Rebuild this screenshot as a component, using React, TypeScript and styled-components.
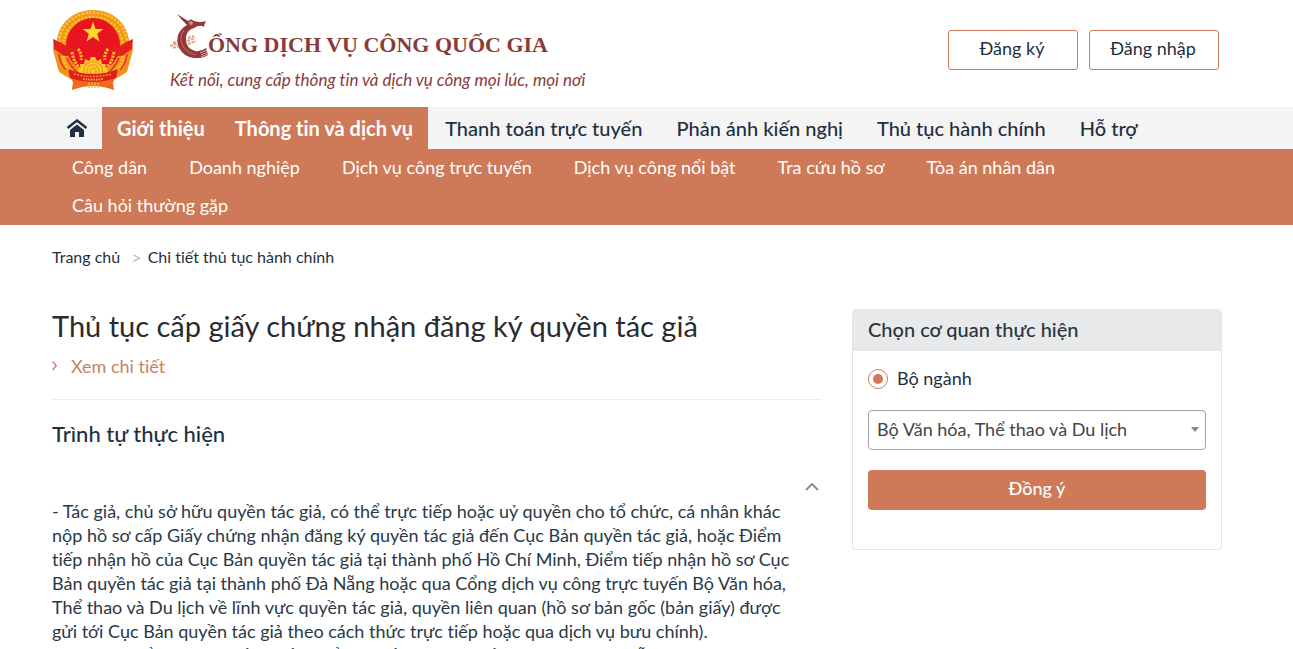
import React from "react";
import styled, { createGlobalStyle } from "styled-components";

const accent = "#ce7a58";
const ink = "#1e2f41";
const maroon = "#8b3a3a";

const GlobalStyle = createGlobalStyle`
  *, *::before, *::after { box-sizing: border-box; }
  body {
    margin: 0;
    background: #fff;
    color: ${ink};
    font-family: Lato, "Noto Sans", sans-serif;
    font-size: 18px;
    line-height: 24px;
    font-variant-ligatures: none;
  }
  h1, h2, p, ul, ol { margin: 0; padding: 0; }
  ul, ol { list-style: none; }
  a { color: inherit; text-decoration: none; }
  button, select { font: inherit; color: inherit; }
`;

const Container = styled.div`
  padding: 0 71px 0 52px;
`;

const HeaderRow = styled(Container)`
  display: flex;
  justify-content: space-between;
  align-items: flex-start;
  height: 107px;
`;

const Brand = styled.a`
  display: flex;
  gap: 36px;
  padding-top: 8px;
`;

const BrandText = styled.span`
  display: flex;
  flex-direction: column;
  color: ${maroon};
`;

const BrandName = styled.span`
  display: flex;
  align-items: flex-end;
  height: 50px;
  font-family: "Liberation Serif", serif;
  font-size: 22px;
  font-weight: 700;
  line-height: 26px;
`;

const Slogan = styled.span`
  padding-top: 10px;
  font-size: 17px;
  font-style: italic;
`;

const Auth = styled.div`
  display: flex;
  gap: 11px;
  padding: 30px 3px 0 0;
`;

const OutlineButton = styled.button`
  width: 130px;
  height: 40px;
  padding: 0 2px 4px 0;
  border: 1px solid ${accent};
  border-radius: 3px;
  background: #fff;
  cursor: pointer;
`;

const NavBar = styled.nav`
  background: #f4f4f4;
`;

const NavList = styled.ul`
  display: flex;
  height: 42px;
`;

const NavLink = styled.a<{ $kind: "home" | "active" | "plain" }>`
  display: flex;
  align-items: center;
  height: 42px;
  padding: 0 ${(p) => (p.$kind === "plain" ? 17 : 15)}px;
  font-size: 20px;
  font-weight: ${(p) => (p.$kind === "active" ? 700 : 500)};
  color: ${(p) => (p.$kind === "active" ? "#fff" : ink)};
  background: ${(p) => (p.$kind === "active" ? accent : "transparent")};
`;

const SubNav = styled.nav`
  background: ${accent};
  color: #fff;
`;

const SubList = styled.ul`
  display: flex;
  flex-wrap: wrap;
  column-gap: 2px;
`;

const SubLink = styled.a`
  display: block;
  height: 38px;
  padding: 0 20px;
  line-height: 36px;
`;

const Crumbs = styled.ol`
  display: flex;
  gap: 6px;
  padding-top: 20px;
  font-size: 16px;
`;

const CrumbMark = styled.span`
  padding-left: 5px;
  font-size: 18px;
  color: #b9bdc1;
`;

const Columns = styled.main`
  display: grid;
  grid-template-columns: minmax(0, 1fr) 370px;
  align-items: start;
  gap: 30px;
  padding-top: 39px;
`;

const Title = styled.h1`
  font-size: 29px;
  font-weight: 400;
  line-height: 34px;
  color: #2b2b2f;
`;

const DetailLink = styled.a`
  display: flex;
  align-items: center;
  gap: 14px;
  padding: 11px 0 21px;
  border-bottom: 1px solid #ececec;
  color: #c7816a;
`;

const SectionTitle = styled.h2`
  padding-top: 19px;
  font-size: 22px;
  font-weight: 500;
  line-height: 30px;
`;

const Toggle = styled.button`
  display: block;
  margin: 27px 2px 7px auto;
  width: 16px;
  height: 16px;
  padding: 0;
  border: 0;
  background: none;
  color: #8a8a8a;
  cursor: pointer;
`;

const Steps = styled.div`
  padding: 0 14px 24px 0;
  color: #2a3947;
`;

const Card = styled.form`
  min-height: 241px;
  border: 1px solid #e3e4e6;
  border-radius: 4px;
  overflow: hidden;
`;

const CardHead = styled.h2`
  padding: 7px 15px 10px;
  background: #e7e9eb;
  font-size: 20px;
  font-weight: 500;
  line-height: 24px;
  color: #2b343d;
`;

const CardBody = styled.div`
  display: grid;
  gap: 20px;
  padding: 15px;
`;

const RadioLabel = styled.label`
  display: flex;
  align-items: center;
  gap: 9px;
`;

const Radio = styled.input`
  appearance: none;
  display: grid;
  place-items: center;
  width: 20px;
  height: 20px;
  margin: 2px 0 0;
  border: 1px solid ${accent};
  border-radius: 50%;
  background: #fff;

  &:checked::before {
    content: "";
    width: 10px;
    height: 10px;
    border-radius: 50%;
    background: ${accent};
  }
`;

const SelectWrap = styled.div`
  position: relative;
`;

const Select = styled.select`
  appearance: none;
  width: 100%;
  height: 40px;
  padding: 0 28px 2px 8px;
  border: 1px solid #a3a3a3;
  border-radius: 4px;
  background: #fff;
  color: #444;
`;

const Caret = styled.svg`
  position: absolute;
  top: 17px;
  right: 7px;
  pointer-events: none;
`;

const Submit = styled.button`
  height: 40px;
  padding: 0 0 4px;
  border: 0;
  border-radius: 4px;
  background: ${accent};
  color: #fff;
  font-weight: 500;
  cursor: pointer;
`;

const star = (cx: number, cy: number, r: number) =>
  Array.from({ length: 10 }, (_, i) => {
    const a = -Math.PI / 2 + (i * Math.PI) / 5;
    const d = i % 2 ? r * 0.4 : r;
    return `${(cx + d * Math.cos(a)).toFixed(2)},${(cy + d * Math.sin(a)).toFixed(2)}`;
  }).join(" ");

function Emblem() {
  return (
    <svg width="82" height="84" viewBox="0 0 82 84" role="img" aria-label="Quốc huy Việt Nam">
      <path d="M41 2 C62 2 76 17 77 33 Q81 36 81 42 L75 64 Q58 76 41 76 Q24 76 7 64 L1 42 Q1 36 5 33 C6 17 20 2 41 2Z" fill="#f0941c" />
      <g fill="none" stroke="#fbc52e" strokeWidth="2.6" strokeDasharray="2.4 1.4">
        <path d="M7 34 C8 18 22 4.500 41 4.500 C60 4.500 74 18 75 34" />
        <path d="M11.500 36 C12 22 24 9 41 9 C58 9 70 22 70.500 36" strokeDashoffset="2" />
      </g>
      <ellipse cx="41" cy="37" rx="27" ry="27" fill="#e8141f" />
      <polygon points={star(41, 24.500, 11)} fill="#ffd92e" />
      <path d="M1 31 Q9 34 14 38 Q20 41 25 41 Q22 46 24 50 Q17 47 12 48 L2 41Z" fill="#e3201f" />
      <path d="M81 31 Q73 34 68 38 Q62 41 57 41 Q60 46 58 50 Q65 47 70 48 L80 41Z" fill="#e3201f" />
      <g fill="none" stroke="#e3301f" strokeWidth="1.500">
        <path d="M15 50 Q18 58 26 65 M7 46 Q8 56 14 62" />
        <path d="M67 50 Q64 58 56 65 M75 46 Q74 56 68 62" />
      </g>
      <g fill="none" stroke="#fbc02c" strokeWidth="3" strokeDasharray="2.2 1.2">
        <path d="M11 48 Q12 58 20 65 M20 44 Q22 56 30 62 M26 41 Q30 46 29 52" />
        <path d="M71 48 Q70 58 62 65 M62 44 Q60 56 52 62 M56 41 Q52 46 53 52" />
      </g>
      <path d="M27 68 L26 62 L29 61 L28 56 L32 56 L33 51 L37 53 L39 49 H43 L45 53 L49 51 L50 56 L54 56 L53 61 L56 62 L55 68Z" fill="#fdc92c" />
      <g fill="none" stroke="#ee9a1c" strokeWidth="1.200">
        <circle cx="41" cy="63" r="9.500" />
        <circle cx="41" cy="63" r="6.200" />
        <circle cx="41" cy="63" r="3" />
      </g>
      <path d="M18 69 Q30 73 41 73 Q52 73 64 69 L61 74 L62 82 Q51 78 41 78 Q31 78 20 82 L21 74Z" fill="#ef6a1c" />
      <path d="M16 61 Q28 66 41 66 Q54 66 66 61 L64 70 Q52 74 41 74 Q30 74 18 70Z" fill="#df1f1b" />
      <path d="M22 66 Q41 71 60 66" fill="none" stroke="#f3902a" strokeWidth="1.400" strokeDasharray="2 1.2" />
      <path d="M31 71 Q41 72.500 51 71" fill="none" stroke="#f9a83a" strokeWidth="2" strokeDasharray="1.6 1" />
      <path d="M37 74 V80 M40 74 V80 M43 74 V80 M46 74 V80" stroke="#f9b02c" strokeWidth="1.200" />
    </svg>
  );
}

function BirdLetter() {
  return (
    <svg width="38" height="48" viewBox="0 0 38 48" role="img" aria-label="C">
      <g fill="none" stroke="#e5a184" strokeWidth="2" strokeDasharray="3 1">
        <path d="M0 36 L9 33 M3 38 L9 36 M3 33 L8 31" />
        <path d="M17 31 L25 28 M18 34 L26 31 M18 28 L24 26" />
      </g>
      <path d="M7 4 L18 11 Q21 8 24 11 Q30 13 36 11 Q34 15 34 17 Q30 14 24 18 Q17 20 16 27 Q15 38 25 41 Q31 42 36 38 L38 45 Q32 49 24 48 Q14 47 9 38 Q5 27 11 20 Q13 17 17 15 Q14 12 12 10Z" fill="#90383a" />
      <path d="M14 20 Q9 26 12 34 Q16 43 26 45" fill="none" stroke="#bd5f50" strokeWidth="1.200" />
      <circle cx="21" cy="13" r="2" fill="#d99077" />
      <path d="M30 43 L37 40 M31 45 L38 42 M31 47 L38 44" fill="none" stroke="#e9c3b5" strokeWidth="0.800" />
    </svg>
  );
}

function HomeIcon() {
  return (
    <svg width="20" height="18" viewBox="0 0 20 18" role="img" aria-label="Trang chủ">
      <path d="M0.500 9 L10 1.500 L19.500 9" fill="none" stroke={ink} strokeWidth="2.400" />
      <path d="M10 5.500 L17 11 V18 H12 V13 H8 V18 H3 V11Z" fill={ink} />
    </svg>
  );
}

const navItems = [
  { label: "Giới thiệu", active: true },
  { label: "Thông tin và dịch vụ", active: true },
  { label: "Thanh toán trực tuyến", active: false },
  { label: "Phản ánh kiến nghị", active: false },
  { label: "Thủ tục hành chính", active: false },
  { label: "Hỗ trợ", active: false },
];

const subItems = [
  "Công dân",
  "Doanh nghiệp",
  "Dịch vụ công trực tuyến",
  "Dịch vụ công nổi bật",
  "Tra cứu hồ sơ",
  "Tòa án nhân dân",
  "Câu hỏi thường gặp",
];

export default function App() {
  return (
    <>
      <GlobalStyle />
      <header>
        <HeaderRow>
          <Brand href="#">
            <Emblem />
            <BrandText>
              <BrandName>
                <BirdLetter />
                ỔNG DỊCH VỤ CÔNG QUỐC GIA
              </BrandName>
              <Slogan>Kết nối, cung cấp thông tin và dịch vụ công mọi lúc, mọi nơi</Slogan>
            </BrandText>
          </Brand>
          <Auth>
            <OutlineButton type="button">Đăng ký</OutlineButton>
            <OutlineButton type="button">Đăng nhập</OutlineButton>
          </Auth>
        </HeaderRow>
        <NavBar>
          <Container>
            <NavList>
              <li>
                <NavLink href="#" $kind="home">
                  <HomeIcon />
                </NavLink>
              </li>
              {navItems.map((n) => (
                <li key={n.label}>
                  <NavLink href="#" $kind={n.active ? "active" : "plain"}>{n.label}</NavLink>
                </li>
              ))}
            </NavList>
          </Container>
        </NavBar>
        <SubNav>
          <Container>
            <SubList>
              {subItems.map((s) => (
                <li key={s}>
                  <SubLink href="#">{s}</SubLink>
                </li>
              ))}
            </SubList>
          </Container>
        </SubNav>
      </header>
      <Container>
        <Crumbs>
          <li><a href="#">Trang chủ</a></li>
          <li><CrumbMark>&gt;</CrumbMark></li>
          <li>Chi tiết thủ tục hành chính</li>
        </Crumbs>
        <Columns>
          <article>
            <Title>Thủ tục cấp giấy chứng nhận đăng ký quyền tác giả</Title>
            <DetailLink href="#">
              <svg width="5" height="10" viewBox="0 0 5 10" fill="none" stroke="currentColor" strokeWidth="1.3">
                <path d="M0.5 0.5 L4.3 4.7 L0.5 9" />
              </svg>
              Xem chi tiết
            </DetailLink>
            <SectionTitle>Trình tự thực hiện</SectionTitle>
            <Toggle type="button" aria-label="Thu gọn">
              <svg width="16" height="16" viewBox="0 0 16 16" fill="none" stroke="currentColor" strokeWidth="1.8">
                <path d="M2 11 L8 5 L14 11" />
              </svg>
            </Toggle>
            <Steps>
              <p>
                - Tác giả, chủ sở hữu quyền tác giả, có thể trực tiếp hoặc uỷ quyền cho tổ chức, cá nhân khác nộp hồ sơ
                cấp Giấy chứng nhận đăng ký quyền tác giả đến Cục Bản quyền tác giả, hoặc Điểm tiếp nhận hồ của Cục Bản
                quyền tác giả tại thành phố Hồ Chí Minh, Điểm tiếp nhận hồ sơ Cục Bản quyền tác giả tại thành phố Đà
                Nẵng hoặc qua Cổng dịch vụ công trực tuyến Bộ Văn hóa, Thể thao và Du lịch về lĩnh vực quyền tác giả,
                quyền liên quan (hồ sơ bản gốc (bản giấy) được gửi tới Cục Bản quyền tác giả theo cách thức trực tiếp
                hoặc qua dịch vụ bưu chính).
              </p>
              <p>
                - Cá nhân, tổ chức nộp hồ sơ cần kiểm tra đầy đủ các giấy tờ theo hướng dẫn của Cục Bản quyền tác giả
                trước khi gửi.
              </p>
            </Steps>
          </article>
          <Card>
            <CardHead>Chọn cơ quan thực hiện</CardHead>
            <CardBody>
              <RadioLabel>
                <Radio type="radio" name="agency" defaultChecked />
                Bộ ngành
              </RadioLabel>
              <SelectWrap>
                <Select aria-label="Bộ ngành">
                  <option>Bộ Văn hóa, Thể thao và Du lịch</option>
                </Select>
                <Caret width="8" height="5" viewBox="0 0 8 5">
                  <path d="M0 0 H8 L4 5Z" fill="#888" />
                </Caret>
              </SelectWrap>
              <Submit type="button">Đồng ý</Submit>
            </CardBody>
          </Card>
        </Columns>
      </Container>
    </>
  );
}
